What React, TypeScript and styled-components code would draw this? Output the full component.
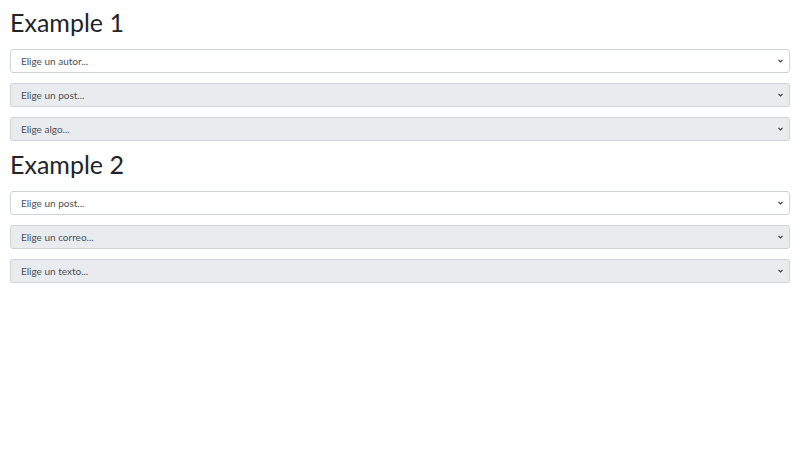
import React from "react";
import styled, { createGlobalStyle } from "styled-components";

const GlobalStyle = createGlobalStyle`
    body {
        margin: 0;
        background: #fff;
        font-family: Lato, "Noto Sans", sans-serif;
        color: #212529;
    }
`;

const Page = styled.div`
    padding: 7px 10px;
    display: flex;
    flex-direction: column;
`;

const Section = styled.section`
    display: flex;
    flex-direction: column;
    gap: 10px;
    margin-bottom: 8px;
`;

const Heading = styled.h2`
    margin: 0 0 2px 0;
    font-size: 25px;
    font-weight: 400;
    line-height: 30px;
    color: #212529;
`;

const SelectWrap = styled.div`
    position: relative;
    display: flex;
`;

const Select = styled.select<{ $disabled?: boolean }>`
    appearance: none;
    -webkit-appearance: none;
    width: 100%;
    height: 24px;
    padding: 0 24px 0 10px;
    font-family: Lato, "Noto Sans", sans-serif;
    font-size: 10px;
    color: #495057;
    background: ${(p) => (p.$disabled ? "#e9ecef" : "#fff")};
    border: 1px solid #ced4da;
    border-radius: 3px;
    outline: none;
    opacity: 1;
`;

const Chevron = styled.svg`
    position: absolute;
    right: 6px;
    top: 9px;
    width: 7px;
    height: 6px;
    pointer-events: none;
`;

type Field = { label: string; disabled?: boolean };

const groups: { title: string; fields: Field[] }[] = [
    {
        title: "Example 1",
        fields: [
            { label: "Elige un autor..." },
            { label: "Elige un post...", disabled: true },
            { label: "Elige algo...", disabled: true },
        ],
    },
    {
        title: "Example 2",
        fields: [
            { label: "Elige un post..." },
            { label: "Elige un correo...", disabled: true },
            { label: "Elige un texto...", disabled: true },
        ],
    },
];

const Dropdown = ({ label, disabled }: Field) => (
    <SelectWrap>
        <Select $disabled={disabled} disabled={disabled} defaultValue="">
            <option value="">{label}</option>
        </Select>
        <Chevron viewBox="0 0 4 5">
            <path d="M0.3 1.5L2 3.3 3.7 1.5" fill="none" stroke="#343a40" strokeWidth="0.9" />
        </Chevron>
    </SelectWrap>
);

const App = () => {
    return (
        <>
            <GlobalStyle />
            <Page>
                {groups.map((g) => (
                    <Section key={g.title}>
                        <Heading>{g.title}</Heading>
                        {g.fields.map((f) => (
                            <Dropdown key={f.label} {...f} />
                        ))}
                    </Section>
                ))}
            </Page>
        </>
    );
};

export default App;
